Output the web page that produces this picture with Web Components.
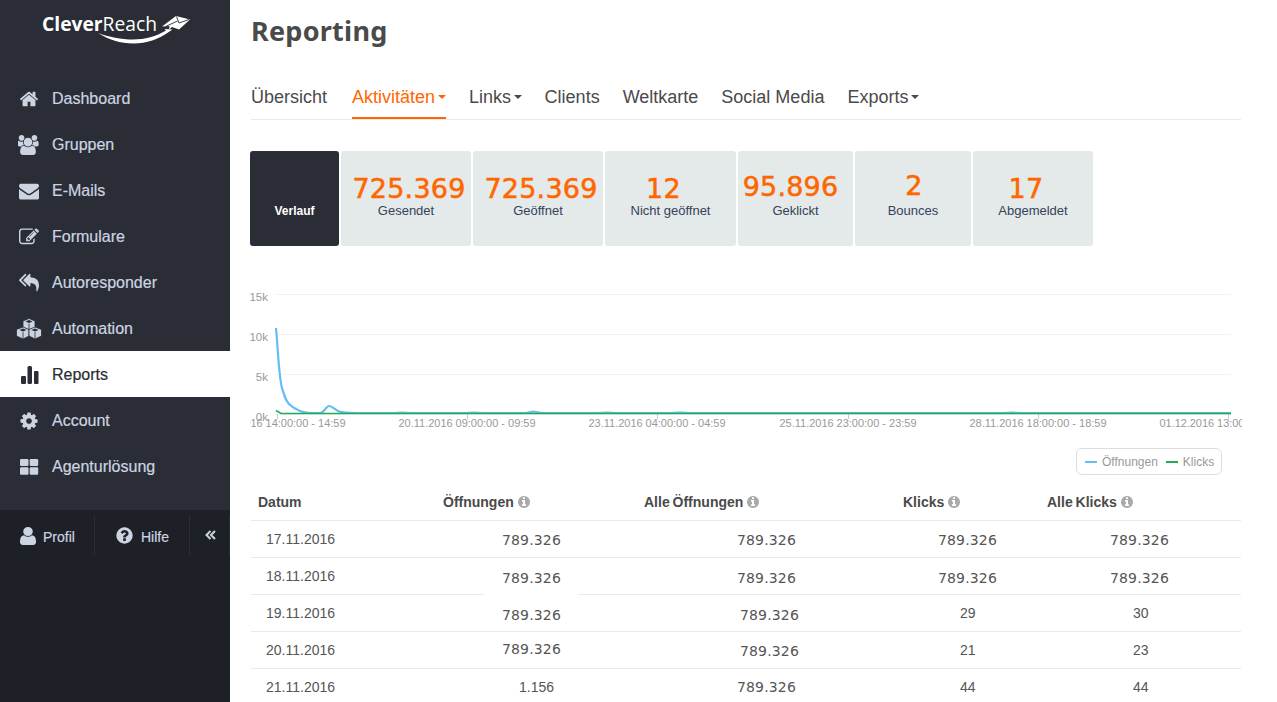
<!DOCTYPE html>
<html lang="de">
<head>
<meta charset="utf-8">
<title>Reporting</title>
<style>
    html, body { margin: 0; height: 100%; overflow: hidden; background: #fff; }
    body { font-family: "Liberation Sans", Arial, sans-serif; display: flex; }
</style>
</head>
<body>
<app-sidebar>
    <nav-item icon="home">Dashboard</nav-item>
    <nav-item icon="users">Gruppen</nav-item>
    <nav-item icon="envelope">E-Mails</nav-item>
    <nav-item icon="edit">Formulare</nav-item>
    <nav-item icon="reply">Autoresponder</nav-item>
    <nav-item icon="cubes">Automation</nav-item>
    <nav-item icon="bars" active>Reports</nav-item>
    <nav-item icon="cog">Account</nav-item>
    <nav-item icon="grid">Agenturlösung</nav-item>
</app-sidebar>
<report-page>
    <report-tabs></report-tabs>
    <stat-row>
        <stat-card dark width="89">Verlauf</stat-card>
        <stat-card value="725.369" width="130" dx="3">Gesendet</stat-card>
        <stat-card value="725.369" width="130" dx="3">Geöffnet</stat-card>
        <stat-card value="12" width="131" dx="-7">Nicht geöffnet</stat-card>
        <stat-card value="95.896" width="115" dx="-5" dy="-2">Geklickt</stat-card>
        <stat-card value="2" width="116" dx="1" dy="-3">Bounces</stat-card>
        <stat-card value="17" width="120" dx="-7">Abgemeldet</stat-card>
    </stat-row>
    <traffic-chart></traffic-chart>
    <report-table></report-table>
</report-page>

<script>
const ICONS = {
    home: [1792, 'M1472 992v480q0 26-19 45t-45 19h-384v-384h-256v384h-384q-26 0-45-19t-19-45v-480q0-1 .5-3t.5-3l575-474 575 474q1 2 1 6zm223-69l-62 74q-8 9-21 11h-3q-13 0-21-7l-692-577-692 577q-12 8-24 7-13-2-21-11l-62-74q-8-10-7-23.5t11-21.5l719-599q32-26 76-26t76 26l244 204v-195q0-14 9-23t23-9h192q14 0 23 9t9 23v408l219 182q10 8 11 21.5t-7 23.5z'],
    users: [1920, 'M529 896q-162 5-265 128h-134q-82 0-138-40.5t-56-118.5q0-353 124-353 6 0 43.5 21t97.5 42.5 119 21.5q67 0 133-23-5 37-5 66 0 139 81 256zm1071 637q0 120-73 189.5t-194 69.5h-874q-121 0-194-69.5t-73-189.5q0-53 3.5-103.5t14-109 26.5-108.5 43-97.5 62-81 85.5-53.5 111.5-20q10 0 43 21.5t73 48 107 48 135 21.5 135-21.5 107-48 73-48 43-21.5q61 0 111.5 20t85.5 53.5 62 81 43 97.5 26.5 108.5 14 109 3.5 103.5zm-1024-1277q0 106-75 181t-181 75-181-75-75-181 75-181 181-75 181 75 75 181zm704 384q0 159-112.5 271.5t-271.5 112.5-271.5-112.5-112.5-271.5 112.5-271.5 271.5-112.5 271.5 112.5 112.5 271.5zm576 225q0 78-56 118.5t-138 40.5h-134q-103-123-265-128 81-117 81-256 0-29-5-66 66 23 133 23 59 0 119-21.5t97.5-42.5 43.5-21q124 0 124 353zm-128-609q0 106-75 181t-181 75-181-75-75-181 75-181 181-75 181 75 75 181z'],
    envelope: [1792, 'M1792 710v794q0 66-47 113t-113 47h-1472q-66 0-113-47t-47-113v-794q44 49 101 87 362 246 497 345 57 42 92.5 65.5t94.5 48 110 24.5h2q51 0 110-24.5t94.5-48 92.5-65.5q170-123 498-345 57-39 100-87zm0-294q0 79-49 151t-122 123q-376 261-468 325-10 7-42.5 30.5t-54 38-52 32.5-57.5 27-50 9h-2q-23 0-50-9t-57.5-27-52-32.5-54-38-42.5-30.5q-91-64-262-182.5t-205-142.5q-62-42-117-115.5t-55-136.5q0-78 41.5-130t118.5-52h1472q65 0 112.5 47t47.5 113z'],
    edit: [1792, 'M888 1184l116-116-152-152-116 116v56h96v96h56zm440-720q-16-16-33 1l-350 350q-17 17-1 33t33-1l350-350q17-17 1-33zm80 594v190q0 119-84.5 203.5t-203.5 84.5h-832q-119 0-203.5-84.5t-84.5-203.5v-832q0-119 84.5-203.5t203.5-84.5h832q63 0 117 25 15 7 18 23 3 17-9 29l-49 49q-14 14-32 8-23-6-45-6h-832q-66 0-113 47t-47 113v832q0 66 47 113t113 47h832q66 0 113-47t47-113v-126q0-13 9-22l64-64q15-15 35-7t20 29zm-96-738l288 288-672 672h-288v-288zm444 132l-92 92-288-288 92-92q28-28 68-28t68 28l152 152q28 28 28 68t-28 68z'],
    reply: [1792, 'M640 1082v70q0 42-39 59-13 5-25 5-27 0-45-19l-512-512q-19-19-19-45t19-45l512-512q29-31 70-14 39 17 39 59v69l-397 398q-19 19-19 45t19 45zm1152 38q0 58-17 133.5t-38.5 138-48 125-40.5 90.5l-20 40q-8 17-28 17-6 0-9-1-25-8-23-34 43-400-106-565-64-71-170.5-110.5t-267.5-52.5v251q0 42-39 59-13 5-25 5-27 0-45-19l-512-512q-19-19-19-45t19-45l512-512q29-31 70-14 39 17 39 59v262q411 28 599 221 169 173 169 509z'],
    cog: [1792, 'M1152 896q0-106-75-181t-181-75-181 75-75 181 75 181 181 75 181-75 75-181zm512-109v222q0 12-8 23t-20 13l-185 28q-19 54-39 91 35 50 107 138 10 12 10 25t-9 23q-27 37-99 108t-94 71q-12 0-26-9l-138-108q-44 23-91 38-16 136-29 186-7 28-36 28h-222q-14 0-24.5-8.5t-11.5-21.5l-28-184q-49-16-90-37l-141 107q-10 9-25 9-14 0-25-11-126-114-165-168-7-10-7-23 0-12 8-23 15-21 51-66.5t54-70.5q-27-50-41-99l-183-27q-13-2-21-12.5t-8-23.5v-222q0-12 8-23t19-13l186-28q14-46 39-92-40-57-107-138-10-12-10-24 0-10 9-23 26-36 98.5-107.5t94.5-71.5q13 0 26 10l138 107q44-23 91-38 16-136 29-186 7-28 36-28h222q14 0 24.5 8.5t11.5 21.5l28 184q49 16 90 37l142-107q9-9 24-9 13 0 25 10 129 119 165 170 7 8 7 22 0 12-8 23-15 21-51 66.5t-54 70.5q26 50 41 98l183 28q13 2 21 12.5t8 23.5z'],
    user: [1792, 'M1536 1399q0 109-62.5 187t-150.5 78h-854q-88 0-150.5-78t-62.5-187q0-85 8.5-160.5t31.5-152 58.5-131 94-89 134.5-34.5q131 128 313 128t313-128q76 0 134.5 34.5t94 89 58.5 131 31.5 152 8.5 160.5zm-256-887q0 159-112.5 271.5t-271.5 112.5-271.5-112.5-112.5-271.5 112.5-271.5 271.5-112.5 271.5 112.5 112.5 271.5z'],
    help: [1792, 'M1024 1376v-192q0-14-9-23t-23-9h-192q-14 0-23 9t-9 23v192q0 14 9 23t23 9h192q14 0 23-9t9-23zm256-672q0-88-55.5-163t-138.5-116-170-41q-243 0-371 213-15 24 8 42l132 100q7 6 19 6 16 0 25-12 53-68 86-92 34-24 86-24 48 0 85.5 26t37.5 59q0 38-20 61t-68 45q-63 28-115.5 86.5t-52.5 125.5v36q0 14 9 23t23 9h192q14 0 23-9t9-23q0-19 21.5-49.5t54.5-49.5q32-18 49-28.5t46-35 44.5-48 28-60.5 12.5-81zm384 192q0 209-103 385.5t-279.5 279.5-385.5 103-385.5-103-279.5-279.5-103-385.5 103-385.5 279.5-279.5 385.5-103 385.5 103 279.5 279.5 103 385.5z'],
    info: [1792, 'M1152 1376v-160q0-14-9-23t-23-9h-96v-512q0-14-9-23t-23-9h-320q-14 0-23 9t-9 23v160q0 14 9 23t23 9h96v320h-96q-14 0-23 9t-9 23v160q0 14 9 23t23 9h448q14 0 23-9t9-23zm-128-896v-160q0-14-9-23t-23-9h-192q-14 0-23 9t-9 23v160q0 14 9 23t23 9h192q14 0 23-9t9-23zm640 416q0 209-103 385.5t-279.5 279.5-385.5 103-385.5-103-279.5-279.5-103-385.5 103-385.5 279.5-279.5 385.5-103 385.5 103 279.5 279.5 103 385.5z']
}

function iconSvg(name, size){
    const [w, d] = ICONS[name]
    return `<svg width="${size * w / 1792}" height="${size}" viewBox="0 0 ${w} 1792" fill="currentColor"><path d="${d}"/></svg>`
}

// these are not font awesome paths, drawn by hand
const CUBES = `<svg width="26" height="22" viewBox="0 0 26 22">
    <g fill="currentColor" stroke="#2a2d35" stroke-width=".8" stroke-linejoin="round">
        <path d="M13 .5l6 2.500v6.500l-6 2.500-6-2.500V3z"/>
        <path d="M7 9l6 2.500V18l-6 3-6.500-3v-6.500z"/>
        <path d="M19 9l6.500 2.500V18L19 21l-6-3v-6.500z"/>
    </g>
    <g fill="#2a2d35">
        <path d="M13 2.100l3.600 1.400L13 5 9.400 3.500z"/>
        <path d="M7 10.600l3.600 1.400L7 13.500 3.400 12z"/>
        <path d="M19 10.600l3.600 1.400-3.600 1.500-3.600-1.500z"/>
    </g>
    <path d="M13 5.500v6M7 14v6.500M19 14v6.500" stroke="#2a2d35" stroke-width=".8"/>
</svg>`
const BARS = `<svg width="19" height="20" viewBox="0 0 19 20" fill="currentColor">
    <rect x="1" y="11" width="5" height="8" rx="1"/><rect x="7.500" y="1" width="4.500" height="18" rx="1.500"/><rect x="14" y="6" width="4.500" height="13" rx="1"/>
</svg>`
const GRID = `<svg width="20" height="18" viewBox="0 0 20 18" fill="currentColor">
    <rect x="1" y="1" width="8.500" height="7" rx="1.200"/><rect x="10.700" y="1" width="8.500" height="7" rx="1.200"/>
    <rect x="1" y="9.300" width="8.500" height="7.500" rx="1.200"/><rect x="10.700" y="9.300" width="8.500" height="7.500" rx="1.200"/>
</svg>`

class navItem extends HTMLElement {
    constructor(){
        super()
        this.attachShadow({mode: "open"})
    }

    getIcon(){
        const name = this.getAttribute('icon')
        if(name === 'cubes') return CUBES
        if(name === 'bars') return BARS
        if(name === 'grid') return GRID
        return iconSvg(name, 20)
    }

    connectedCallback(){
        this.shadowRoot.innerHTML = `
            <style>
                :host {
                    display: flex;
                    align-items: center;
                    height: 46px;
                    box-sizing: border-box;
                    padding: 2px 0 0 16px;
                    font-size: 16px;
                    color: #ccd4e2;
                    -webkit-text-stroke: .2px currentColor;
                }
                :host([active]) {
                    background: #fff;
                    color: #2a2d35;
                }
                .icon {
                    width: 26px;
                    margin-right: 10px;
                    display: flex;
                    justify-content: center;
                }
            </style>
            <span class="icon">${this.getIcon()}</span>
            <slot></slot>
        `
    }
}

class appSidebar extends HTMLElement {
    constructor(){
        super()
        this.attachShadow({mode: "open"})
    }

    connectedCallback(){
        this.shadowRoot.innerHTML = `
            <style>
                :host {
                    display: flex;
                    flex-direction: column;
                    flex: none;
                    width: 230px;
                    height: 702px;
                    background: #2a2d35;
                }
                .logo { height: 75px; }
                .logo svg { display: block; }
                .links { height: 435px; }
                .foot {
                    flex: 1;
                    background: #1e2028;
                    display: flex;
                    align-items: flex-start;
                    padding-top: 5px;
                    font-size: 14px;
                    color: #ccd4e2;
                    -webkit-text-stroke: .2px currentColor;
                }
                .foot div {
                    height: 40px;
                    box-sizing: border-box;
                    display: flex;
                    align-items: center;
                    border-right: 1px solid #2a2d35;
                }
                .foot span { margin-top: 3px; }
                .profil { width: 95px; padding-left: 20px; }
                .hilfe { width: 95px; padding-left: 20px; }
                .back { width: 40px; padding-left: 15px; }
                .profil svg { margin-right: 7px; margin-top: 2px; }
                .hilfe svg { margin-right: 7px; margin-top: 1px; }
            </style>
            <div class="logo">
                <svg width="230" height="75" viewBox="0 0 230 75">
                    <text x="42" y="31" font-family="Open Sans, sans-serif" font-size="20" fill="#fff" textLength="115" lengthAdjust="spacingAndGlyphs"><tspan font-weight="700">Clever</tspan><tspan>Reach</tspan></text>
                    <path d="M98 33c11 4 23 6.500 35 6.500 12 0 23-3 33-9l-1.500-1.500 8 .500-3 2c-11 8-23 12-36 12-13 0-25-4-35.500-10.500z" fill="#fff"/>
                    <path d="M162 26.500L176 16l14 3.500-11 10-7-2.500-3 2.500.5-3.500z" fill="#fff"/>
                    <path d="M166 26.300l11.500-5.300M176.500 16.500l2.500 6.500 10-3.500" fill="none" stroke="#2a2d35" stroke-width=".9"/>
                </svg>
            </div>
            <div class="links"><slot></slot></div>
            <div class="foot">
                <div class="profil"><svg width="16" height="18" viewBox="256 128 1280 1536" preserveAspectRatio="none" fill="currentColor"><path d="${ICONS.user[1]}"/></svg><span>Profil</span></div>
                <div class="hilfe">${iconSvg('help', 19)}<span>Hilfe</span></div>
                <div class="back">
                    <svg width="11" height="10" viewBox="0 0 11 10" fill="none" stroke="currentColor" stroke-width="2"><path d="M5.500 1L1.500 5l4 4M10 1L6 5l4 4"/></svg>
                </div>
            </div>
        `
    }
}

class reportPage extends HTMLElement {
    constructor(){
        super()
        this.attachShadow({mode: "open"})
    }

    connectedCallback(){
        this.shadowRoot.innerHTML = `
            <style>
                :host {
                    display: block;
                    flex: 1;
                    min-width: 0;
                    padding: 0 36px 0 21px;
                    height: 702px;
                    overflow: hidden;
                }
                h1 {
                    margin: 0;
                    height: 64px;
                    font: bold 27px/62px "Noto Sans", sans-serif;
                    color: #4a4a4a;
                    letter-spacing: .25px;
                }
            </style>
            <h1>Reporting</h1>
            <slot></slot>
        `
    }
}

class reportTabs extends HTMLElement {
    constructor(){
        super()
        this.attachShadow({mode: "open"})
    }

    connectedCallback(){
        const tabs = [['Übersicht'], ['Aktivitäten', 1, 1], ['Links', 1], ['Clients'], ['Weltkarte'], ['Social Media'], ['Exports', 1]]
        this.shadowRoot.innerHTML = `
            <style>
                :host {
                    display: flex;
                    gap: 23px;
                    height: 56px;
                    box-sizing: border-box;
                    padding-top: 10px;
                    border-bottom: 1px solid #eaeaea;
                    font-size: 18px;
                    color: #4a4a4a;
                }
                a {
                    display: flex;
                    align-items: center;
                    padding-top: 3px;
                    height: 45px;
                    box-sizing: border-box;
                    border-bottom: 2px solid transparent;
                }
                a:first-of-type { margin-right: 2px; }
                a.on { color: #ff6600; border-color: #ff6600; }
                i {
                    width: 0;
                    height: 0;
                    margin-left: 2.500px;
                    border: 4px solid transparent;
                    border-top-color: currentColor;
                    border-bottom: 0;
                }
                a.on i { margin-left: 3px; }
            </style>
            ${tabs.map(t => `<a class="${t[2] ? 'on' : ''}">${t[0]}${t[1] ? '<i></i>' : ''}</a>`).join('')}
        `
    }
}

class statRow extends HTMLElement {
    constructor(){
        super()
        this.attachShadow({mode: "open"})
    }

    connectedCallback(){
        this.shadowRoot.innerHTML = `
            <style>
                :host {
                    display: flex;
                    gap: 2px;
                    margin: 31px 0 0 -1px;
                }
            </style>
            <slot></slot>
        `
    }
}

class statCard extends HTMLElement {
    constructor(){
        super()
        this.attachShadow({mode: "open"})
    }

    static get observedAttributes(){
        return ['value', 'width', 'dx', 'dy']
    }

    attributeChangedCallback(attr, oldVal, newVal){
        this[attr] = newVal
    }

    connectedCallback(){
        const dx = Number(this.dx || 0) * 2
        const dy = Number(this.dy || 0)
        this.shadowRoot.innerHTML = `
            <style>
                :host {
                    display: flex;
                    flex-direction: column;
                    align-items: center;
                    flex: none;
                    width: ${this.width}px;
                    height: 95px;
                    box-sizing: border-box;
                    padding-top: 23px;
                    border-radius: 3px;
                    background: #e4e9e9;
                    font-size: 13px;
                    line-height: 14px;
                    color: #36425a;
                }
                :host([dark]) {
                    background: #2a2d35;
                    color: #fff;
                    font-weight: bold;
                    font-size: 12px;
                }
                .num {
                    height: 30px;
                    margin: ${dy}px 0 ${-dy}px ${dx}px;
                    font: 27px/30px "DejaVu Sans", sans-serif;
                    letter-spacing: .2px;
                    color: #ff6600;
                    white-space: nowrap;
                    -webkit-text-stroke: .5px #ff6600;
                }
            </style>
            <div class="num">${this.value || ''}</div>
            <slot></slot>
        `
    }
}

class trafficChart extends HTMLElement {
    constructor(){
        super()
        this.attachShadow({mode: "open"})
    }

    connectedCallback(){
        const ticks = [277, 467, 657, 848, 1038, 1228]
        const labels = ['17.11.2016 14:00:00 - 14:59', '20.11.2016 09:00:00 - 09:59', '23.11.2016 04:00:00 - 04:59', '25.11.2016 23:00:00 - 23:59', '28.11.2016 18:00:00 - 18:59', '01.12.2016 13:00:00 - 13:59']
        const rows = [['15k', 294], ['10k', 334], ['5k', 374], ['0k', 414]]
        this.shadowRoot.innerHTML = `
            <style>
                :host { display: block; margin: 39px -1px 0 -11px; }
                svg { display: block; }
                text { font-family: "Liberation Sans", sans-serif; font-size: 11px; fill: #999; }
                .y { font-size: 11.500px; }
                .legend {
                    display: flex;
                    align-items: center;
                    gap: 8px;
                    box-sizing: border-box;
                    width: 146px;
                    height: 27px;
                    margin: 13px 0 0 836px;
                    padding-left: 8px;
                    border: 1px solid #ddd;
                    border-radius: 6px;
                    font-size: 12px;
                    color: #999;
                }
                .legend span { display: flex; align-items: center; gap: 5px; }
                .legend i { width: 12px; height: 2px; }
            </style>
            <svg width="1002" height="150" viewBox="240 285 1002 150">
                <defs><clipPath id="labels"><rect x="250" y="415" width="992" height="20"/></clipPath></defs>
                ${rows.map(r => `<line x1="275" x2="1231" y1="${r[1] + .5}" y2="${r[1] + .5}" stroke="#f3f3f3"/>`).join('')}
                ${ticks.map(x => `<line x1="${x + .5}" x2="${x + .5}" y1="414" y2="419" stroke="#ccc"/>`).join('')}
                ${rows.map(r => `<text class="y" x="268" y="${r[1] + 7}" text-anchor="end">${r[0]}</text>`).join('')}
                <g clip-path="url(#labels)">
                    ${ticks.map((x, i) => `<text x="${x}" y="427" text-anchor="middle" textLength="137">${labels[i]}</text>`).join('')}
                </g>
                <path fill="none" stroke="#64bcf5" stroke-width="2.200" stroke-linejoin="round" d="M276 328C278 350 279 378 282 388S286 401 289 404 295 409 300 411 308 413 320 413C324 413 326 406 329 406S334 409 338 411 346 412.500 356 413H394L402 412.700 410 413H466L474 412.700 482 413H526L533 411.500 542 413H598L606 412.500 616 413H670L680 412.700 690 413H1002L1012 412.600 1022 413H1231"/>
                <path fill="none" stroke="#22aa55" stroke-width="1.500" d="M276 410.500L281 413.500H1231"/>
            </svg>
            <div class="legend">
                <span><i style="background:#64bcf5"></i>Öffnungen</span>
                <span><i style="background:#22aa55"></i>Klicks</span>
            </div>
        `
    }
}

class reportTable extends HTMLElement {
    constructor(){
        super()
        this.attachShadow({mode: "open"})
    }

    // each cell: text, left offset inside the column, vertical nudge
    getRows(){
        const n = '789.326'
        return [
            [['17.11.2016', 15, 0], [n, 59, 1], [n, 93, 1], [n, 35, 1], [n, 63, 1]],
            [['18.11.2016', 15, 0], [n, 59, 2], [n, 93, 2], [n, 35, 2], [n, 63, 2]],
            [['19.11.2016', 15, 0], [n, 59, 2], [n, 96, 2], ['29', 57, 0], ['30', 86, 0]],
            [['20.11.2016', 15, 0], [n, 59, -1], [n, 96, 1], ['21', 57, 0], ['23', 86, 0]],
            [['21.11.2016', 15, 0], ['1.156', 76, 0], [n, 93, 0], ['44', 57, 0], ['44', 86, 0]]
        ]
    }

    getCell(cell){
        const nudge = cell[2] > 0 ? `padding-top:${cell[2] * 2}px` : `padding-bottom:${-cell[2] * 2}px`
        return `<div class="${cell[0] === '789.326' ? 'num' : ''}" style="padding-left:${cell[1]}px;${nudge}">${cell[0]}</div>`
    }

    connectedCallback(){
        const info = iconSvg('info', 14)
        this.shadowRoot.innerHTML = `
            <style>
                :host {
                    display: block;
                    margin-top: 9px;
                    font-size: 14px;
                    color: #555;
                }
                .row {
                    display: grid;
                    grid-template-columns: 192px 201px 259px 144px 194px;
                    align-items: center;
                    position: relative;
                    height: 37px;
                    box-sizing: border-box;
                    border-bottom: 1px solid #eaeaea;
                }
                .head { font-weight: bold; color: #4a4a4a; word-spacing: -1px; }
                .head div { display: flex; align-items: center; gap: 3px; }
                .head svg { color: #aaa; }
                .num {
                    font: 14px "DejaVu Sans", sans-serif;
                    letter-spacing: .15px;
                }
                /* the white cell of 18.11. cuts into its row line */
                .patch {
                    position: absolute;
                    left: 233px;
                    bottom: -1px;
                    width: 94px;
                    height: 1px;
                    background: #fff;
                }
            </style>
            <div class="row head">
                <div style="padding-left:7px">Datum</div>
                <div><span>Öffnungen</span>${info}</div>
                <div><span>Alle Öffnungen</span>${info}</div>
                <div><span>Klicks</span>${info}</div>
                <div><span>Alle Klicks</span>${info}</div>
            </div>
            ${this.getRows().map((r, i) => `<div class="row">${r.map(c => this.getCell(c)).join('')}${i === 1 ? '<span class="patch"></span>' : ''}</div>`).join('')}
        `
    }
}

customElements.define("nav-item", navItem)
customElements.define("app-sidebar", appSidebar)
customElements.define("report-page", reportPage)
customElements.define("report-tabs", reportTabs)
customElements.define("stat-row", statRow)
customElements.define("stat-card", statCard)
customElements.define("traffic-chart", trafficChart)
customElements.define("report-table", reportTable)
</script>
</body>
</html>
